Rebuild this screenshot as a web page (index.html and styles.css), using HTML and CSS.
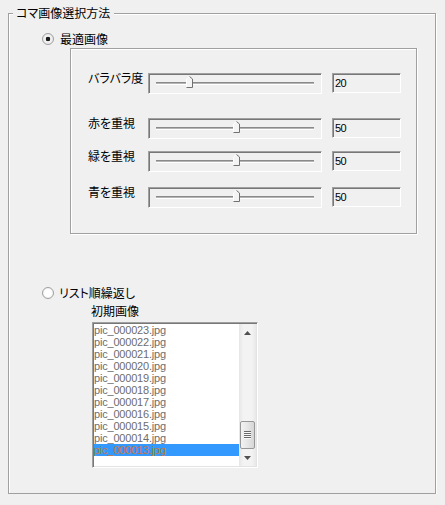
FILE: index.html
```html
<!DOCTYPE html>
<html lang="ja">
<head>
    <meta charset="UTF-8">
    <meta name="viewport" content="width=device-width, initial-scale=1.0">
    <title>コマ画像選択方法</title>
    <link rel="stylesheet" href="styles.css">
</head>
<body>
    <fieldset class="group">
        <legend>コマ画像選択方法</legend>

        <div class="radio radio-best">
            <span class="radio-mark checked"></span>
            <span>最適画像</span>
        </div>

        <div class="panel">
            <div class="row">
                <span class="row-label">バラバラ度</span>
                <div class="slider">
                    <div class="track"></div>
                    <svg class="thumb" style="left: 37px" width="7" height="12" viewBox="0 0 7 12">
                        <path d="M0.5 11.5V3L3.5 0.5L6.5 3V11.5Z" fill="#f4f4f4"/>
                        <path d="M0.5 11V3L3.5 0.5" fill="none" stroke="#fff"/>
                        <path d="M3.5 0.5L6.5 3V11.5H0.5" fill="none" stroke="#707070"/>
                    </svg>
                </div>
                <div class="edit">20</div>
            </div>

            <div class="row row-red">
                <span class="row-label">赤を重視</span>
                <div class="slider">
                    <div class="track"></div>
                    <svg class="thumb" style="left: 84px" width="7" height="12" viewBox="0 0 7 12">
                        <path d="M0.5 11.5V3L3.5 0.5L6.5 3V11.5Z" fill="#f4f4f4"/>
                        <path d="M0.5 11V3L3.5 0.5" fill="none" stroke="#fff"/>
                        <path d="M3.5 0.5L6.5 3V11.5H0.5" fill="none" stroke="#707070"/>
                    </svg>
                </div>
                <div class="edit">50</div>
            </div>

            <div class="row row-green">
                <span class="row-label">緑を重視</span>
                <div class="slider">
                    <div class="track"></div>
                    <svg class="thumb" style="left: 84px" width="7" height="12" viewBox="0 0 7 12">
                        <path d="M0.5 11.5V3L3.5 0.5L6.5 3V11.5Z" fill="#f4f4f4"/>
                        <path d="M0.5 11V3L3.5 0.5" fill="none" stroke="#fff"/>
                        <path d="M3.5 0.5L6.5 3V11.5H0.5" fill="none" stroke="#707070"/>
                    </svg>
                </div>
                <div class="edit">50</div>
            </div>

            <div class="row row-blue">
                <span class="row-label">青を重視</span>
                <div class="slider">
                    <div class="track"></div>
                    <svg class="thumb" style="left: 84px" width="7" height="12" viewBox="0 0 7 12">
                        <path d="M0.5 11.5V3L3.5 0.5L6.5 3V11.5Z" fill="#f4f4f4"/>
                        <path d="M0.5 11V3L3.5 0.5" fill="none" stroke="#fff"/>
                        <path d="M3.5 0.5L6.5 3V11.5H0.5" fill="none" stroke="#707070"/>
                    </svg>
                </div>
                <div class="edit">50</div>
            </div>
        </div>

        <div class="radio radio-list">
            <span class="radio-mark"></span>
            <span>リスト順繰返し</span>
        </div>

        <div class="list-title">初期画像</div>

        <div class="listbox">
            <ul class="items">
                <li>pic_000023.jpg</li>
                <li>pic_000022.jpg</li>
                <li>pic_000021.jpg</li>
                <li>pic_000020.jpg</li>
                <li>pic_000019.jpg</li>
                <li>pic_000018.jpg</li>
                <li>pic_000017.jpg</li>
                <li>pic_000016.jpg</li>
                <li>pic_000015.jpg</li>
                <li>pic_000014.jpg</li>
                <li class="selected">pic_000013.jpg</li>
            </ul>
            <div class="scrollbar">
                <div class="scroll-btn">
                    <svg width="7" height="4" viewBox="0 0 7 4"><path d="M0 4L3.5 0L7 4Z" fill="#505050"/></svg>
                </div>
                <div class="scroll-thumb">
                    <svg width="7" height="8" viewBox="0 0 7 8">
                        <path d="M0 0.5H7M0 2.5H7M0 4.5H7M0 6.5H7" stroke="#6a6a6a"/>
                        <path d="M0 1.5H7M0 3.5H7M0 5.5H7M0 7.5H7" stroke="#fafafa"/>
                    </svg>
                </div>
                <div class="scroll-btn">
                    <svg width="7" height="4" viewBox="0 0 7 4"><path d="M0 0L3.5 4L7 0Z" fill="#505050"/></svg>
                </div>
            </div>
        </div>
    </fieldset>
</body>
</html>
```

FILE: styles.css
```css
* {
    box-sizing: border-box;
}
body {
    margin: 0;
    background-color: #f0f0f0;
    font-family: "Noto Sans CJK JP", sans-serif;
    font-size: 12px;
    line-height: 14px;
    font-feature-settings: "palt";
    color: #000;
}
.group {
    margin: 6px 0 0 8px;
    width: 428px;
    min-width: 0;
    padding: 0 0 25px;
    border: 1px solid #a0a0a0;
    box-shadow: inset 1px 1px #fff, 1px 1px #fff;
}
.group legend {
    margin-left: 4px;
    padding: 0 4px 0 3px;
    background-color: #f0f0f0;
}
.radio {
    display: flex;
    align-items: center;
    height: 14px;
    gap: 6px;
}
.radio-best {
    margin: 12px 0 0 33px;
}
.radio-list {
    margin: 52px 0 0 33px;
    gap: 5px;
}
.radio-mark {
    width: 12px;
    height: 12px;
    border: 1px solid #a0a0a0;
    border-radius: 50%;
    background: radial-gradient(circle, #fff 0 45%, #e2e2e2 100%);
}
.radio-mark.checked {
    background: radial-gradient(circle, #1c1c1c 0 2px, #f6f6f6 2.6px, #dcdcdc 100%);
}
.panel {
    margin: 2px 0 0 61px;
    width: 347px;
    padding: 24px 0 25px 17px;
    border: 1px solid #a0a0a0;
    box-shadow: inset 1px 1px #fff, 1px 1px #fff;
}
.row {
    display: flex;
    height: 21px;
}
.row-red {
    margin-top: 24px;
}
.row-green {
    margin-top: 12px;
}
.row-blue {
    margin-top: 15px;
}
.row-label {
    width: 60px;
    margin-top: -2px;
    white-space: nowrap;
}
.slider {
    position: relative;
    display: flex;
    align-items: center;
    width: 174px;
    height: 21px;
    padding: 0 7px;
    border: 1px solid;
    border-color: #a0a0a0 #fff #fff #a0a0a0;
    box-shadow: inset 1px 1px #777;
}
.track {
    flex: 1;
    height: 3px;
    background: linear-gradient(#8a8a8a 0 1px, #b4b4b4 1px 2px, #fff 2px);
}
.thumb {
    position: absolute;
    top: 2px;
}
.edit {
    margin-left: 10px;
    width: 69px;
    height: 20px;
    padding-left: 2px;
    border: 1px solid;
    border-color: #a0a0a0 #fff #fff #a0a0a0;
    box-shadow: inset 1px 1px #777;
    font-family: "Liberation Sans", Arial, sans-serif;
    font-size: 11px;
    line-height: 18px;
    letter-spacing: -0.5px;
}
.list-title {
    margin: 4px 0 0 82px;
}
.listbox {
    display: flex;
    margin: 4px 0 0 83px;
    width: 166px;
    height: 146px;
    padding: 1px;
    border: 1px solid;
    border-color: #a0a0a0 #fff #fff #a0a0a0;
    box-shadow: inset 1px 1px #777, inset -1px -1px #e3e3e3;
    background-color: #fff;
}
.items {
    flex: 1;
    margin: 0;
    padding: 0;
    list-style: none;
    font-family: "Liberation Sans", Arial, sans-serif;
    font-size: 11px;
    line-height: 12px;
    letter-spacing: -0.2px;
    color: #6d6d6d;
}
.items li {
    height: 12px;
    white-space: nowrap;
}
.items .selected {
    background-color: #3399ff;
    color: #c8783c;
}
.scrollbar {
    display: flex;
    flex-direction: column;
    width: 17px;
    background: linear-gradient(to right, #e6e6e6, #f3f3f3 25%, #f3f3f3 75%, #e8e8e8);
}
.scroll-btn {
    display: flex;
    align-items: center;
    justify-content: center;
    height: 17px;
}
.scroll-thumb {
    display: flex;
    align-items: center;
    justify-content: center;
    margin: auto 1px 0;
    height: 28px;
    border: 1px solid #979797;
    border-radius: 2px;
    background: linear-gradient(to right, #f3f3f3, #e6e6e6 50%, #d6d6d6);
}
```
